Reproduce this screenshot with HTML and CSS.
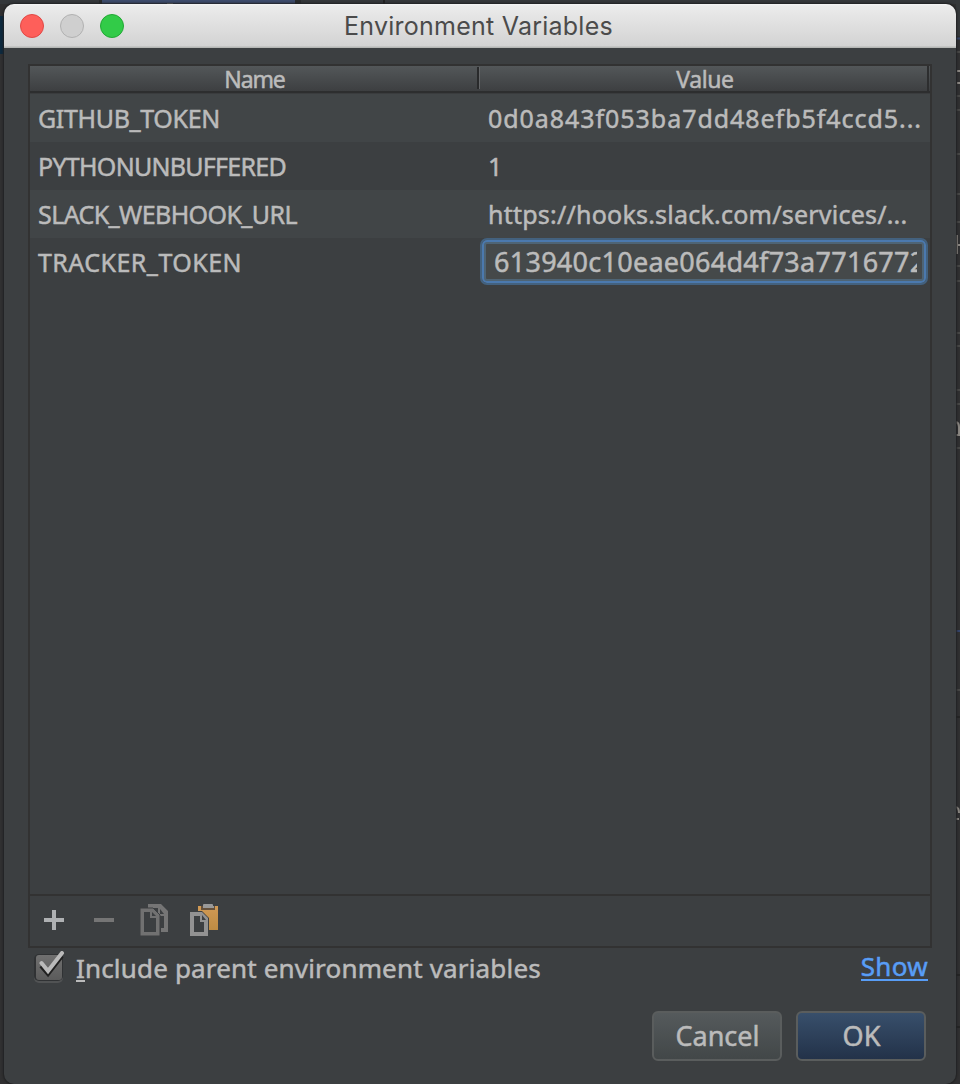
FILE: index.html
```html
<!DOCTYPE html>
<html lang="en">
<head>
<meta charset="utf-8">
<title>Environment Variables</title>
<link rel="stylesheet" href="styles.css">
</head>
<body>
<div class="backdrop" aria-hidden="true">
  <svg width="960" height="1084" viewBox="0 0 960 1084">
    <rect width="960" height="1084" fill="#303031"/>
    <rect width="960" height="4" fill="#34373a"/>
    <rect x="0" y="16" width="4" height="38" fill="#0d293e"/>
    <rect x="99" y="0" width="202" height="4" fill="#292b2d"/>
    <rect x="102" y="0" width="193" height="4" fill="#3d4b6b"/>
    <rect x="167" y="3" width="6" height="1" fill="#aaa"/>
    <rect x="383" y="0" width="2" height="4" fill="#222"/>
    <rect x="956" y="0" width="4" height="36" fill="#35383a"/>
    <path d="M956 38.500h4M956 631h4" stroke="#35456b" stroke-width="2"/>
    <path d="M956 52h4M956 96h4M956 110h4M956 154h4M956 194h4M956 222h4M956 266h4M956 281h4M956 333h4M956 346h4M956 390h4M956 404h4M956 448h4M956 690h4" stroke="#474746" stroke-width="2"/>
    <path d="M956 717h4M956 975h4M956 1027h4" stroke="#242424" stroke-width="2"/>
    <path d="M957 71h3M957 83h3M957 235v19M957 245h3M956 422q3 1 3 5v8h-3M956 807q3 1 3 6M956 819h3" stroke="#8b8782" stroke-width="2" fill="none"/>
  </svg>
</div>
<main class="window">
  <header class="titlebar">
    <div class="lights"><i class="light close"></i><i class="light minimize"></i><i class="light maximize"></i></div>
    <h1 class="title">Environment Variables</h1>
  </header>
  <section class="panel">
    <div class="thead">
      <div class="th"><span class="t-name">Name</span></div>
      <div class="th th-value"><span class="t-value">Value</span></div>
      <div class="th-end"></div>
    </div>
    <div class="rows">
      <div class="row"><div class="cell"><span class="t-github">GITHUB_TOKEN</span></div><div class="cell"><span class="t-hash">0d0a843f053ba7dd48efb5f4ccd5...</span></div></div>
      <div class="row"><div class="cell"><span class="t-python">PYTHONUNBUFFERED</span></div><div class="cell"><span>1</span></div></div>
      <div class="row"><div class="cell"><span class="t-slack">SLACK_WEBHOOK_URL</span></div><div class="cell"><span class="t-url">https://hooks.slack.com/services/...</span></div></div>
      <div class="row"><div class="cell"><span class="t-tracker">TRACKER_TOKEN</span></div><div class="editor"><div class="clip"><span class="t-edit">613940c10eae064d4f73a7716772</span></div></div></div>
    </div>
    <div class="toolbar">
      <svg width="20" height="20" viewBox="0 0 20 20"><path d="M8 0h4v8h8v4h-8v8H8v-8H0V8h8z" fill="#afb1b3"/></svg>
      <svg width="20" height="20" viewBox="0 0 20 20"><path d="M0 8h20v4H0z" fill="#757575"/></svg>
      <svg class="doc" width="28" height="32" viewBox="0 0 28 32"><path d="M8 0h13l7 7v21h-7v-4h3V12h-6V4H8z" fill="#757575"/><path d="M20 5v5h4z" fill="#3c3f41"/><path d="M0 4h13l7 7v21H0z" fill="#717171" stroke="#3c3f41" stroke-width="1"/><path d="M4 8h6v6h6v14H4z" fill="#3c3f41"/><path d="M12 8v4h4z" fill="#3c3f41"/></svg>
      <svg class="doc" width="28" height="32" viewBox="0 0 28 32"><defs><linearGradient id="clipboard" x2="0" y2="1"><stop stop-color="#d19a55"/><stop offset="1" stop-color="#bd8b43"/></linearGradient></defs><path d="M8 2h20v24H8z" fill="url(#clipboard)"/><path d="M11 2h14v4H11z" fill="#66513b"/><path d="M13 1q0-1 1-1h8q1 0 1 1v1h1v2H13z" fill="#999"/><path d="M-1 7h13l7 7v19H-1z" fill="#3c3f41"/><path d="M0 8h12l6 6v18H0z" fill="#929292"/><path d="M4 12h6v6h4v10H4zM12 11v5h4z" fill="#3c3f41"/></svg>
    </div>
  </section>
  <div class="options">
    <label class="check">
      <svg width="32" height="34" viewBox="0 0 32 34"><defs><linearGradient id="box" x2="0" y2="1"><stop stop-color="#707070"/><stop offset="1" stop-color="#5b5b5b"/></linearGradient></defs><rect x="0" y="5" width="29" height="27" rx="5" fill="#515354"/><rect x="0" y="3" width="29" height="27" rx="5" fill="#303234"/><rect x="2" y="4" width="26" height="25" rx="3" fill="url(#box)"/><path d="M7 15l7 8L28 5" stroke="#202020" stroke-width="4" fill="none"/><path d="M7.500 12l6.500 8L28 2" stroke="#bababa" stroke-width="4" stroke-linecap="round" fill="none"/></svg>
      <span class="t-include"><span class="mnemonic">I</span>nclude parent environment variables</span>
    </label>
    <a class="show"><span class="t-show">Show</span></a>
  </div>
  <footer class="actions"><button class="btn"><span class="t-cancel">Cancel</span></button><button class="btn primary"><span class="t-ok">OK</span></button></footer>
</main>
</body>
</html>
```

FILE: styles.css
```css
* { box-sizing: border-box; }
body { margin: 0; width: 960px; height: 1084px; overflow: hidden; background: #303031; font-family: "Noto Sans", sans-serif; color: #bbb; font-size: 25px; font-weight: 400; position: relative; padding: 4px 4px 0; }
.backdrop { position: absolute; inset: 0; }
.backdrop svg, svg { display: block; flex: none; }
span { white-space: nowrap; -webkit-text-stroke: 0.5px currentColor; }
.window { position: relative; width: 952px; height: 1080px; background: #3c3f41; border-radius: 10px; box-shadow: 0 0 2px 1px #202122; display: flex; flex-direction: column; overflow: hidden; }
.titlebar { height: 44px; flex: none; display: grid; grid-template-columns: 120px 1fr 128px; align-items: center; background: linear-gradient(#f5f5f5 0, #ebebeb 2px, #d3d3d3 42px, #b5b7b5 43px); }
.lights { display: flex; gap: 16px; padding-left: 16px; }
.light { width: 24px; height: 24px; border-radius: 50%; border: 1px solid #e04845; background: #fe5f5a; }
.minimize { border-color: #b1b1b1; background: #cfcfcf; }
.maximize { border-color: #22a834; background: #32cb48; }
.title { margin: 0; text-align: center; font: 400 25px/44px Inter, sans-serif; letter-spacing: 0.24px; color: #4b4b4b; white-space: nowrap; padding: 0 0 0 5px; }
.panel { margin: 16px 24px 0; height: 884px; border: 2px solid #323232; flex: none; display: flex; flex-direction: column; }
.thead { height: 28px; flex: none; display: grid; grid-template-columns: 449px 448px 3px; background: linear-gradient(#535759, #3d3f41 25px, #2d2e2f 25px, #2d2e2f 27px, #3a3c3e 27px); line-height: 27px; font-size: 23px; }
.th { text-align: center; height: 25px; }
.th-value { box-shadow: inset 1px 0 #646668, -2px 0 #292a2b; height: 22px; margin-top: 1px; padding-left: 4px; }
.th-value span { position: relative; top: -1px; }
.th-end { height: 26px; border-left: 2px solid #2d2e2f; }
.t-name { letter-spacing: -1.1px; }
.t-value { letter-spacing: -0.4px; }
.rows { flex: 1; }
.row { height: 48px; display: grid; grid-template-columns: 450px 450px; }
.row:nth-child(odd) { background: #414547; }
.row:nth-child(n+4) { background: none; }
.cell { padding-left: 8px; line-height: 48px; height: 48px; }
.t-github { letter-spacing: -0.35px; }
.t-python { letter-spacing: -0.72px; }
.t-slack { letter-spacing: -0.6px; }
.t-tracker { letter-spacing: 0.46px; }
.t-hash { letter-spacing: 0.95px; }
.t-url { letter-spacing: 0.23px; }
.editor { height: 47px; margin: 0 2px 0 0; border: 2px solid #43617e; border-radius: 7px; padding: 0 9px 0 9px; background: #45494a; box-shadow: inset 0 0 0 2px #4b79ae, inset 0 0 0 4px #4e6475; }
.clip { overflow: hidden; height: 43px; line-height: 44px; font-size: 27px; padding-left: 3px; letter-spacing: 0.27px; }
.toolbar { height: 52px; border-top: 2px solid #323232; padding: 0 0 2px 14px; display: flex; align-items: center; gap: 30px; }
.toolbar .doc { margin-right: -8px; }
.toolbar .doc:nth-child(3) { margin-left: -4px; }
.toolbar .doc:nth-child(4) { margin-left: 0; }
.options { height: 60px; flex: none; display: flex; justify-content: space-between; padding: 3px 28px 0 30px; line-height: 34px; font-size: 26px; }
.check { display: flex; gap: 10px; }
.t-include { letter-spacing: 0.17px; }
.mnemonic { border-bottom: 2px solid #bbb; display: inline-block; height: 31px; }
.show { color: #589df6; margin-top: -2px; }
.show span { display: inline-block; height: 32px; border-bottom: 2px solid; letter-spacing: 0.3px; }
.actions { display: flex; justify-content: flex-end; gap: 14px; padding: 3px 30.5px 0 0; }
.btn { width: 130px; height: 50px; border: 2px solid #5a5d5d; border-radius: 6px; background: linear-gradient(#555a5c, #424748); color: #bbb; font: 400 27px/46px "Noto Sans", sans-serif; padding: 0 0 0 2px; }
.btn.primary { background: linear-gradient(#384f6b, #233249); }
```
